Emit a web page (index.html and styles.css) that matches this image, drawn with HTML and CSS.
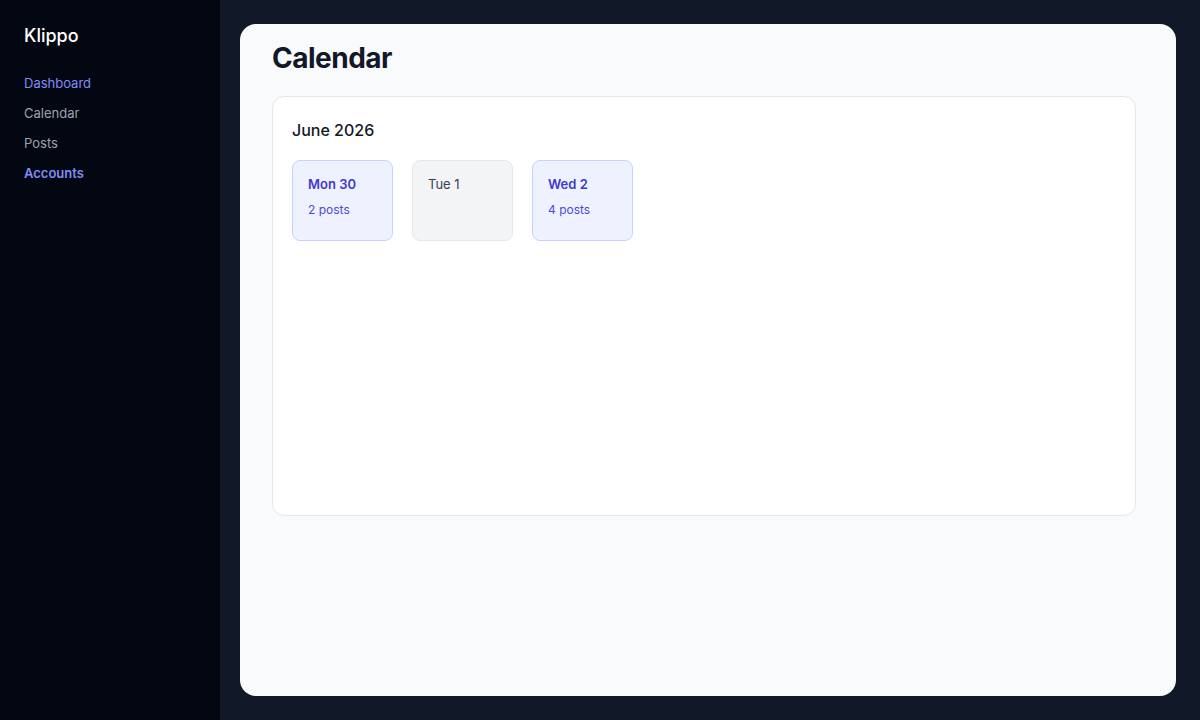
FILE: index.html
```html
<!DOCTYPE html>
<html lang="en">
<head>
    <meta charset="UTF-8">
    <meta name="viewport" content="width=device-width, initial-scale=1.0">
    <title>Klippo - Calendar</title>
    <link rel="stylesheet" href="styles.css">
</head>
<body>
    <div class="app">
        <aside class="sidebar">
            <div class="brand">Klippo</div>
            <nav class="nav">
                <a href="#" class="nav-link active">Dashboard</a>
                <a href="#" class="nav-link">Calendar</a>
                <a href="#" class="nav-link">Posts</a>
                <a href="#" class="nav-link current">Accounts</a>
            </nav>
        </aside>

        <main class="main">
            <div class="page">
                <h1>Calendar</h1>

                <section class="month">
                    <h2>June 2026</h2>
                    <div class="days">
                        <div class="day busy">
                            <div class="day-name">Mon 30</div>
                            <div class="day-count">2 posts</div>
                        </div>
                        <div class="day">
                            <div class="day-name">Tue 1</div>
                        </div>
                        <div class="day busy">
                            <div class="day-name">Wed 2</div>
                            <div class="day-count">4 posts</div>
                        </div>
                    </div>
                </section>
            </div>
        </main>
    </div>
</body>
</html>
```

FILE: styles.css
```css
* {
    box-sizing: border-box;
}
body {
    margin: 0;
    font-family: Inter, "Noto Sans", sans-serif;
    background-color: #111827;
}
.app {
    display: flex;
    min-height: 720px;
}
.sidebar {
    width: 220px;
    flex-shrink: 0;
    background-color: #030712;
    padding: 24px;
}
.brand {
    color: #ffffff;
    font-size: 18px;
    font-weight: 500;
    line-height: 24px;
    margin-bottom: 20px;
}
.nav {
    display: flex;
    flex-direction: column;
}
.nav-link {
    color: #9ca3af;
    font-size: 13px;
    line-height: 30px;
    text-decoration: none;
}
.nav-link.active {
    color: #818cf8;
}
.nav-link.current {
    color: #818cf8;
    font-weight: 600;
}
.main {
    flex: 1;
    padding: 24px 24px 24px 20px;
    display: flex;
}
.page {
    flex: 1;
    background-color: #f9fafb;
    border-radius: 16px;
    padding: 14px 40px 32px 32px;
}
h1 {
    margin: 0 0 18px;
    font-size: 28px;
    line-height: 40px;
    font-weight: 700;
    letter-spacing: -0.5px;
    color: #111827;
}
.month {
    background: #ffffff;
    border: 1px solid #e5e7eb;
    border-radius: 12px;
    padding: 19px;
    min-height: 420px;
}
h2 {
    margin: 0 0 16px;
    font-size: 16px;
    line-height: 28px;
    font-weight: 500;
    color: #111827;
}
.days {
    display: flex;
    gap: 19px;
}
.day {
    width: 101px;
    height: 81px;
    border-radius: 8px;
    border: 1px solid #e5e7eb;
    background: #f3f4f6;
    padding: 13px 15px;
}
.day-name {
    font-size: 13px;
    line-height: 20px;
    color: #374151;
}
.day-count {
    margin-top: 7px;
    font-size: 12px;
    line-height: 18px;
    color: #4f46e5;
}
.day.busy {
    background: #eef2ff;
    border-color: #c7d2fe;
}
.day.busy .day-name {
    color: #4338ca;
    font-weight: 600;
}
```
